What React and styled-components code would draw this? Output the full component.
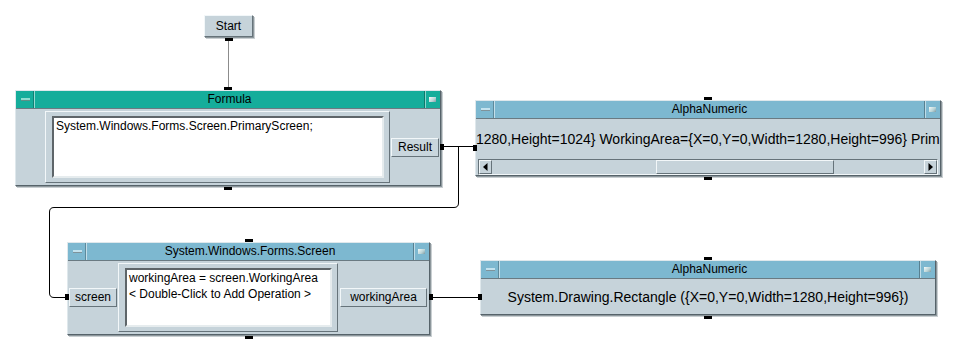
import React from "react";
import styled, { createGlobalStyle, css } from "styled-components";

const GlobalStyle = createGlobalStyle`
  html, body {
    margin: 0;
    padding: 0;
    background: #fff;
  }
  body {
    font-family: "Liberation Sans", Arial, sans-serif;
    color: #000;
  }
`;

const raised = css`
  border-style: solid;
  border-width: 1px;
  border-color: #f2f7f9 #66737a #66737a #f2f7f9;
`;

const sunken = css`
  border-style: solid;
  border-width: 1px;
  border-color: #66737a #f2f7f9 #f2f7f9 #66737a;
`;

const Canvas = styled.div`
  position: relative;
  width: 954px;
  height: 346px;
  overflow: hidden;
  background: #fff;
`;

const WireLayer = styled.svg`
  position: absolute;
  left: 0;
  top: 0;
  width: 954px;
  height: 346px;
  pointer-events: none;
`;

const StartButton = styled.div`
  position: absolute;
  left: 204px;
  top: 15px;
  width: 49px;
  height: 22px;
  box-sizing: border-box;
  ${raised};
  background: #c6d3da;
  box-shadow: 1px 1px 0 #8d979c, 2px 2px 0 #c9cfd2;
  font-size: 12px;
  line-height: 20px;
  text-align: center;
`;

const Node = styled.div`
  position: absolute;
  left: ${(p) => p.$x}px;
  top: ${(p) => p.$y}px;
  width: ${(p) => p.$w}px;
  height: ${(p) => p.$h}px;
  box-sizing: border-box;
  display: flex;
  flex-direction: column;
  background: #c6d3da;
  border: 1px solid;
  border-color: #dfe8ec #56636a #56636a #dfe8ec;
  box-shadow: 1px 1px 0 #8d979c, 2px 2px 0 #c9cfd2;
`;

const TitleBar = styled.div`
  flex: none;
  height: 17px;
  display: flex;
  align-items: stretch;
  background: ${(p) => p.$tone};
  border-bottom: 1px solid #6a7a82;
`;

const TitleText = styled.div`
  flex: 1;
  font-size: 12px;
  line-height: 17px;
  text-align: center;
  white-space: nowrap;
  overflow: hidden;
`;

const MinButton = styled.div`
  flex: none;
  width: 18px;
  display: flex;
  align-items: center;
  justify-content: center;
  border-right: 1px solid rgba(255, 255, 255, 0.55);
  box-shadow: inset -1px 0 0 rgba(0, 0, 0, 0.25);
`;

const Dash = styled.span`
  width: 9px;
  height: 2px;
  background: ${(p) => p.$light};
  border-bottom: 1px solid rgba(0, 0, 0, 0.35);
`;

const MaxButton = styled.div`
  flex: none;
  width: 15px;
  display: flex;
  align-items: center;
  justify-content: center;
  border-left: 1px solid rgba(0, 0, 0, 0.3);
  box-shadow: inset 1px 0 0 rgba(255, 255, 255, 0.5);
`;

const Square = styled.span`
  width: 7px;
  height: 5px;
  background: linear-gradient(135deg, #f4fbfa 0%, #b9d3d6 60%, #7e9aa2 100%);
`;

const Body = styled.div`
  flex: 1;
  min-height: 0;
  display: flex;
  align-items: stretch;
`;

const Strip = styled.div`
  flex: none;
  width: ${(p) => p.$w}px;
  box-sizing: border-box;
  padding: 0 ${(p) => p.$pad || 1}px;
  display: flex;
  align-items: center;
`;

const Panel = styled.div`
  flex: 1;
  display: flex;
  margin: 2px 0;
  padding: 4px 5px 4px 6px;
  ${raised};
`;

const TextBox = styled.div`
  flex: 1;
  background: #fff;
  border: 2px solid;
  border-color: #5e6569 #e6ecee #e6ecee #5e6569;
  padding: 0 2px;
  font-size: 12px;
  line-height: 16px;
  white-space: pre;
  overflow: hidden;
`;

const Port = styled.div`
  flex: 1;
  height: 19px;
  box-sizing: border-box;
  ${raised};
  background: #c9d6dd;
  font-size: 12px;
  line-height: 17px;
  text-align: center;
  white-space: nowrap;
`;

const Readout = styled.div`
  flex: 1;
  display: flex;
  align-items: center;
  justify-content: ${(p) => (p.$center ? "center" : "flex-start")};
  font-size: 14px;
  white-space: nowrap;
  overflow: hidden;
`;

const Column = styled.div`
  flex: 1;
  display: flex;
  flex-direction: column;
  min-width: 0;
`;

const ScrollBar = styled.div`
  flex: none;
  height: 16px;
  margin: 0 2px;
  box-sizing: border-box;
  display: flex;
  ${sunken};
`;

const Arrow = styled.div`
  flex: none;
  width: 13px;
  box-sizing: border-box;
  ${raised};
  display: flex;
  align-items: center;
  justify-content: center;
`;

const Track = styled.div`
  flex: 1;
  position: relative;
  background: #c6d3da;
`;

const Thumb = styled.div`
  position: absolute;
  top: 0;
  bottom: 0;
  box-sizing: border-box;
  ${raised};
`;

const Pin = styled.span`
  position: absolute;
  background: #000;
  ${(p) =>
    p.$side === "top" &&
    css`
      left: calc(50% - 4px);
      top: -4px;
      width: 8px;
      height: 3px;
    `}
  ${(p) =>
    p.$side === "bottom" &&
    css`
      left: calc(50% - 4px);
      bottom: -5px;
      width: 8px;
      height: 3px;
    `}
  ${(p) =>
    p.$side === "left" &&
    css`
      left: -3px;
      top: ${p.$at}px;
      width: 4px;
      height: 6px;
    `}
  ${(p) =>
    p.$side === "right" &&
    css`
      right: -4px;
      top: ${p.$at}px;
      width: 4px;
      height: 6px;
    `}
`;

const TEAL = { tone: "#15ad9b", light: "#8fdcd0" };
const BLUE = { tone: "#7db8d0", light: "#c3e2ee" };

function Title({ scheme, children }) {
  return (
    <TitleBar $tone={scheme.tone}>
      <MinButton>
        <Dash $light={scheme.light} />
      </MinButton>
      <TitleText>{children}</TitleText>
      <MaxButton>
        <Square />
      </MaxButton>
    </TitleBar>
  );
}

function TriangleLeft() {
  return (
    <svg width="5" height="8" viewBox="0 0 5 8">
      <path d="M4.5 0 L0 4 L4.5 8 Z" fill="#000" />
    </svg>
  );
}

function TriangleRight() {
  return (
    <svg width="5" height="8" viewBox="0 0 5 8">
      <path d="M0.5 0 L5 4 L0.5 8 Z" fill="#000" />
    </svg>
  );
}

export default function App() {
  return (
    <>
      <GlobalStyle />
      <Canvas>
        <WireLayer viewBox="0 0 954 346">
          <path d="M228.5 40 V88" stroke="#8c8c8c" strokeWidth="1" fill="none" />
          <path d="M443 146.5 H474" stroke="#000" strokeWidth="1" fill="none" />
          <path
            d="M458.5 146.5 V203 Q458.5 207.5 454 207.5 H54 Q49.5 207.5 49.5 212 V293 Q49.5 297.5 54 297.5 H65"
            stroke="#000"
            strokeWidth="1"
            fill="none"
          />
          <path d="M432 297.5 H479" stroke="#000" strokeWidth="1" fill="none" />
        </WireLayer>

        <StartButton>
          Start
          <Pin $side="bottom" />
        </StartButton>

        <Node $x={15} $y={90} $w={426} $h={96}>
          <Pin $side="top" />
          <Title scheme={TEAL}>Formula</Title>
          <Body>
            <Strip $w={29} />
            <Panel>
              <TextBox>System.Windows.Forms.Screen.PrimaryScreen;</TextBox>
            </Panel>
            <Strip $w={50}>
              <Port>Result</Port>
            </Strip>
          </Body>
          <Pin $side="right" $at={53} />
          <Pin $side="bottom" />
        </Node>

        <Node $x={475} $y={100} $w={466} $h={76}>
          <Pin $side="top" />
          <Title scheme={BLUE}>AlphaNumeric</Title>
          <Column>
            <Readout>
              1280,Height=1024} WorkingArea={"{"}X=0,Y=0,Width=1280,Height=996{"}"} Prim
            </Readout>
            <ScrollBar>
              <Arrow>
                <TriangleLeft />
              </Arrow>
              <Track>
                <Thumb style={{ left: "37.9%", width: "41.3%" }} />
              </Track>
              <Arrow>
                <TriangleRight />
              </Arrow>
            </ScrollBar>
          </Column>
          <Pin $side="left" $at={44} />
          <Pin $side="bottom" />
        </Node>

        <Node $x={67} $y={242} $w={363} $h={93}>
          <Pin $side="top" />
          <Title scheme={BLUE}>System.Windows.Forms.Screen</Title>
          <Body>
            <Strip $w={50}>
              <Port>screen</Port>
            </Strip>
            <Panel>
              <TextBox>
                {"workingArea = screen.WorkingArea\n< Double-Click to Add Operation >"}
              </TextBox>
            </Panel>
            <Strip $w={91} $pad={2}>
              <Port>workingArea</Port>
            </Strip>
          </Body>
          <Pin $side="left" $at={51} />
          <Pin $side="right" $at={51} />
          <Pin $side="bottom" />
        </Node>

        <Node $x={480} $y={260} $w={456} $h={55}>
          <Pin $side="top" />
          <Title scheme={BLUE}>AlphaNumeric</Title>
          <Readout $center>
            System.Drawing.Rectangle ({"{"}X=0,Y=0,Width=1280,Height=996{"}"})
          </Readout>
          <Pin $side="left" $at={33} />
          <Pin $side="bottom" />
        </Node>
      </Canvas>
    </>
  );
}
